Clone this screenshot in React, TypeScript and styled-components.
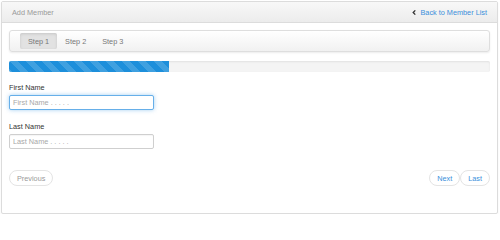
import React from "react";
import styled, { createGlobalStyle } from "styled-components";

const GlobalStyle = createGlobalStyle`
  html, body {
    margin: 0;
    padding: 0;
    background: #fff;
  }
  body {
    font-family: "Liberation Sans", Arial, sans-serif;
    font-size: 7.3px;
    color: #333;
  }
  * { box-sizing: border-box; }
`;

const Panel = styled.section`
  width: 497px;
  height: 213px;
  margin: 1px 0 0 1px;
  border: 1px solid #dcdcdc;
  border-radius: 2px;
  box-shadow: 0 1px 2px rgba(0, 0, 0, 0.06);
  display: flex;
  flex-direction: column;
`;

const PanelHeader = styled.header`
  height: 21px;
  padding: 0 10px;
  display: flex;
  align-items: center;
  justify-content: space-between;
  background: linear-gradient(to bottom, #f8f8f8, #ececec);
  border-bottom: 1px solid #dcdcdc;
`;

const Title = styled.span`
  color: #9a9a9a;
`;

const BackLink = styled.a`
  display: flex;
  align-items: center;
  gap: 4px;
  color: #3b8fdb;
  text-decoration: none;
  cursor: pointer;
`;

const PanelBody = styled.div`
  flex: 1;
  padding: 7px 7px 0 7px;
  display: flex;
  flex-direction: column;
`;

const StepBar = styled.nav`
  height: 22px;
  padding: 1px 10px;
  display: flex;
  align-items: center;
  border: 1px solid #dedede;
  border-radius: 3px;
  background: linear-gradient(to bottom, #ffffff, #f1f1f1);
  box-shadow: 0 1px 2px rgba(0, 0, 0, 0.08);
`;

const Step = styled.span<{ $active?: boolean }>`
  height: 16px;
  padding: 0 8px;
  display: flex;
  align-items: center;
  color: #777;
  border-radius: 2px;
  background: ${(p) => (p.$active ? "#e2e2e2" : "transparent")};
  box-shadow: ${(p) =>
    p.$active ? "inset 0 1px 3px rgba(0, 0, 0, 0.12)" : "none"};
`;

const Progress = styled.div`
  margin-top: 9px;
  height: 11px;
  border-radius: 2px;
  background: #f4f4f4;
  box-shadow: inset 0 1px 2px rgba(0, 0, 0, 0.08);
  overflow: hidden;
`;

const ProgressFill = styled.div`
  height: 100%;
  background-color: #1d8fdb;
  background-image: linear-gradient(
    45deg,
    rgba(255, 255, 255, 0.15) 25%,
    transparent 25%,
    transparent 50%,
    rgba(255, 255, 255, 0.15) 50%,
    rgba(255, 255, 255, 0.15) 75%,
    transparent 75%,
    transparent
  );
  background-size: 16px 16px;
`;

const Field = styled.div<{ $first?: boolean }>`
  margin-top: ${(p) => (p.$first ? "10px" : "11px")};
  display: flex;
  flex-direction: column;
  gap: 2px;
`;

const Label = styled.label`
  line-height: 11px;
  color: #333;
`;

const Input = styled.input<{ $focused?: boolean }>`
  width: 145px;
  height: 15px;
  padding: 0 3px;
  font-family: inherit;
  font-size: 7.3px;
  color: #555;
  border: 1px solid ${(p) => (p.$focused ? "#66afe9" : "#cfcfcf")};
  border-radius: 2px;
  outline: none;
  box-shadow: ${(p) =>
    p.$focused ? "0 0 4px rgba(102, 175, 233, 0.6)" : "inset 0 1px 1px rgba(0,0,0,0.04)"};
  &::placeholder {
    color: #a8a8a8;
  }
`;

const Pager = styled.div`
  margin-top: 21px;
  display: flex;
  justify-content: space-between;
`;

const PagerGroup = styled.div`
  display: flex;
`;

const PagerButton = styled.a<{ $disabled?: boolean }>`
  height: 16px;
  padding: 0 7px;
  display: flex;
  align-items: center;
  border: 1px solid #e4e4e4;
  border-radius: 8px;
  background: #fff;
  color: ${(p) => (p.$disabled ? "#9a9a9a" : "#3b8fdb")};
  text-decoration: none;
  cursor: ${(p) => (p.$disabled ? "default" : "pointer")};
`;

const Chevron = () => (
  <svg width="4" height="5" viewBox="0 0 4 5">
    <path d="M3.3 0.4 L1.2 2.5 L3.3 4.6" fill="none" stroke="#333" strokeWidth="1.3" />
  </svg>
);

const App = () => {
  return (
    <>
      <GlobalStyle />
      <Panel>
        <PanelHeader>
          <Title>Add Member</Title>
          <BackLink>
            <Chevron />
            Back to Member List
          </BackLink>
        </PanelHeader>
        <PanelBody>
          <StepBar>
            <Step $active>Step 1</Step>
            <Step>Step 2</Step>
            <Step>Step 3</Step>
          </StepBar>
          <Progress>
            <ProgressFill style={{ width: `${100 / 3}%` }} />
          </Progress>
          <Field $first>
            <Label>First Name</Label>
            <Input $focused placeholder="First Name . . . . ." />
          </Field>
          <Field>
            <Label>Last Name</Label>
            <Input placeholder="Last Name . . . . ." />
          </Field>
          <Pager>
            <PagerButton $disabled>Previous</PagerButton>
            <PagerGroup>
              <PagerButton>Next</PagerButton>
              <PagerButton>Last</PagerButton>
            </PagerGroup>
          </Pager>
        </PanelBody>
      </Panel>
    </>
  );
};

export default App;
